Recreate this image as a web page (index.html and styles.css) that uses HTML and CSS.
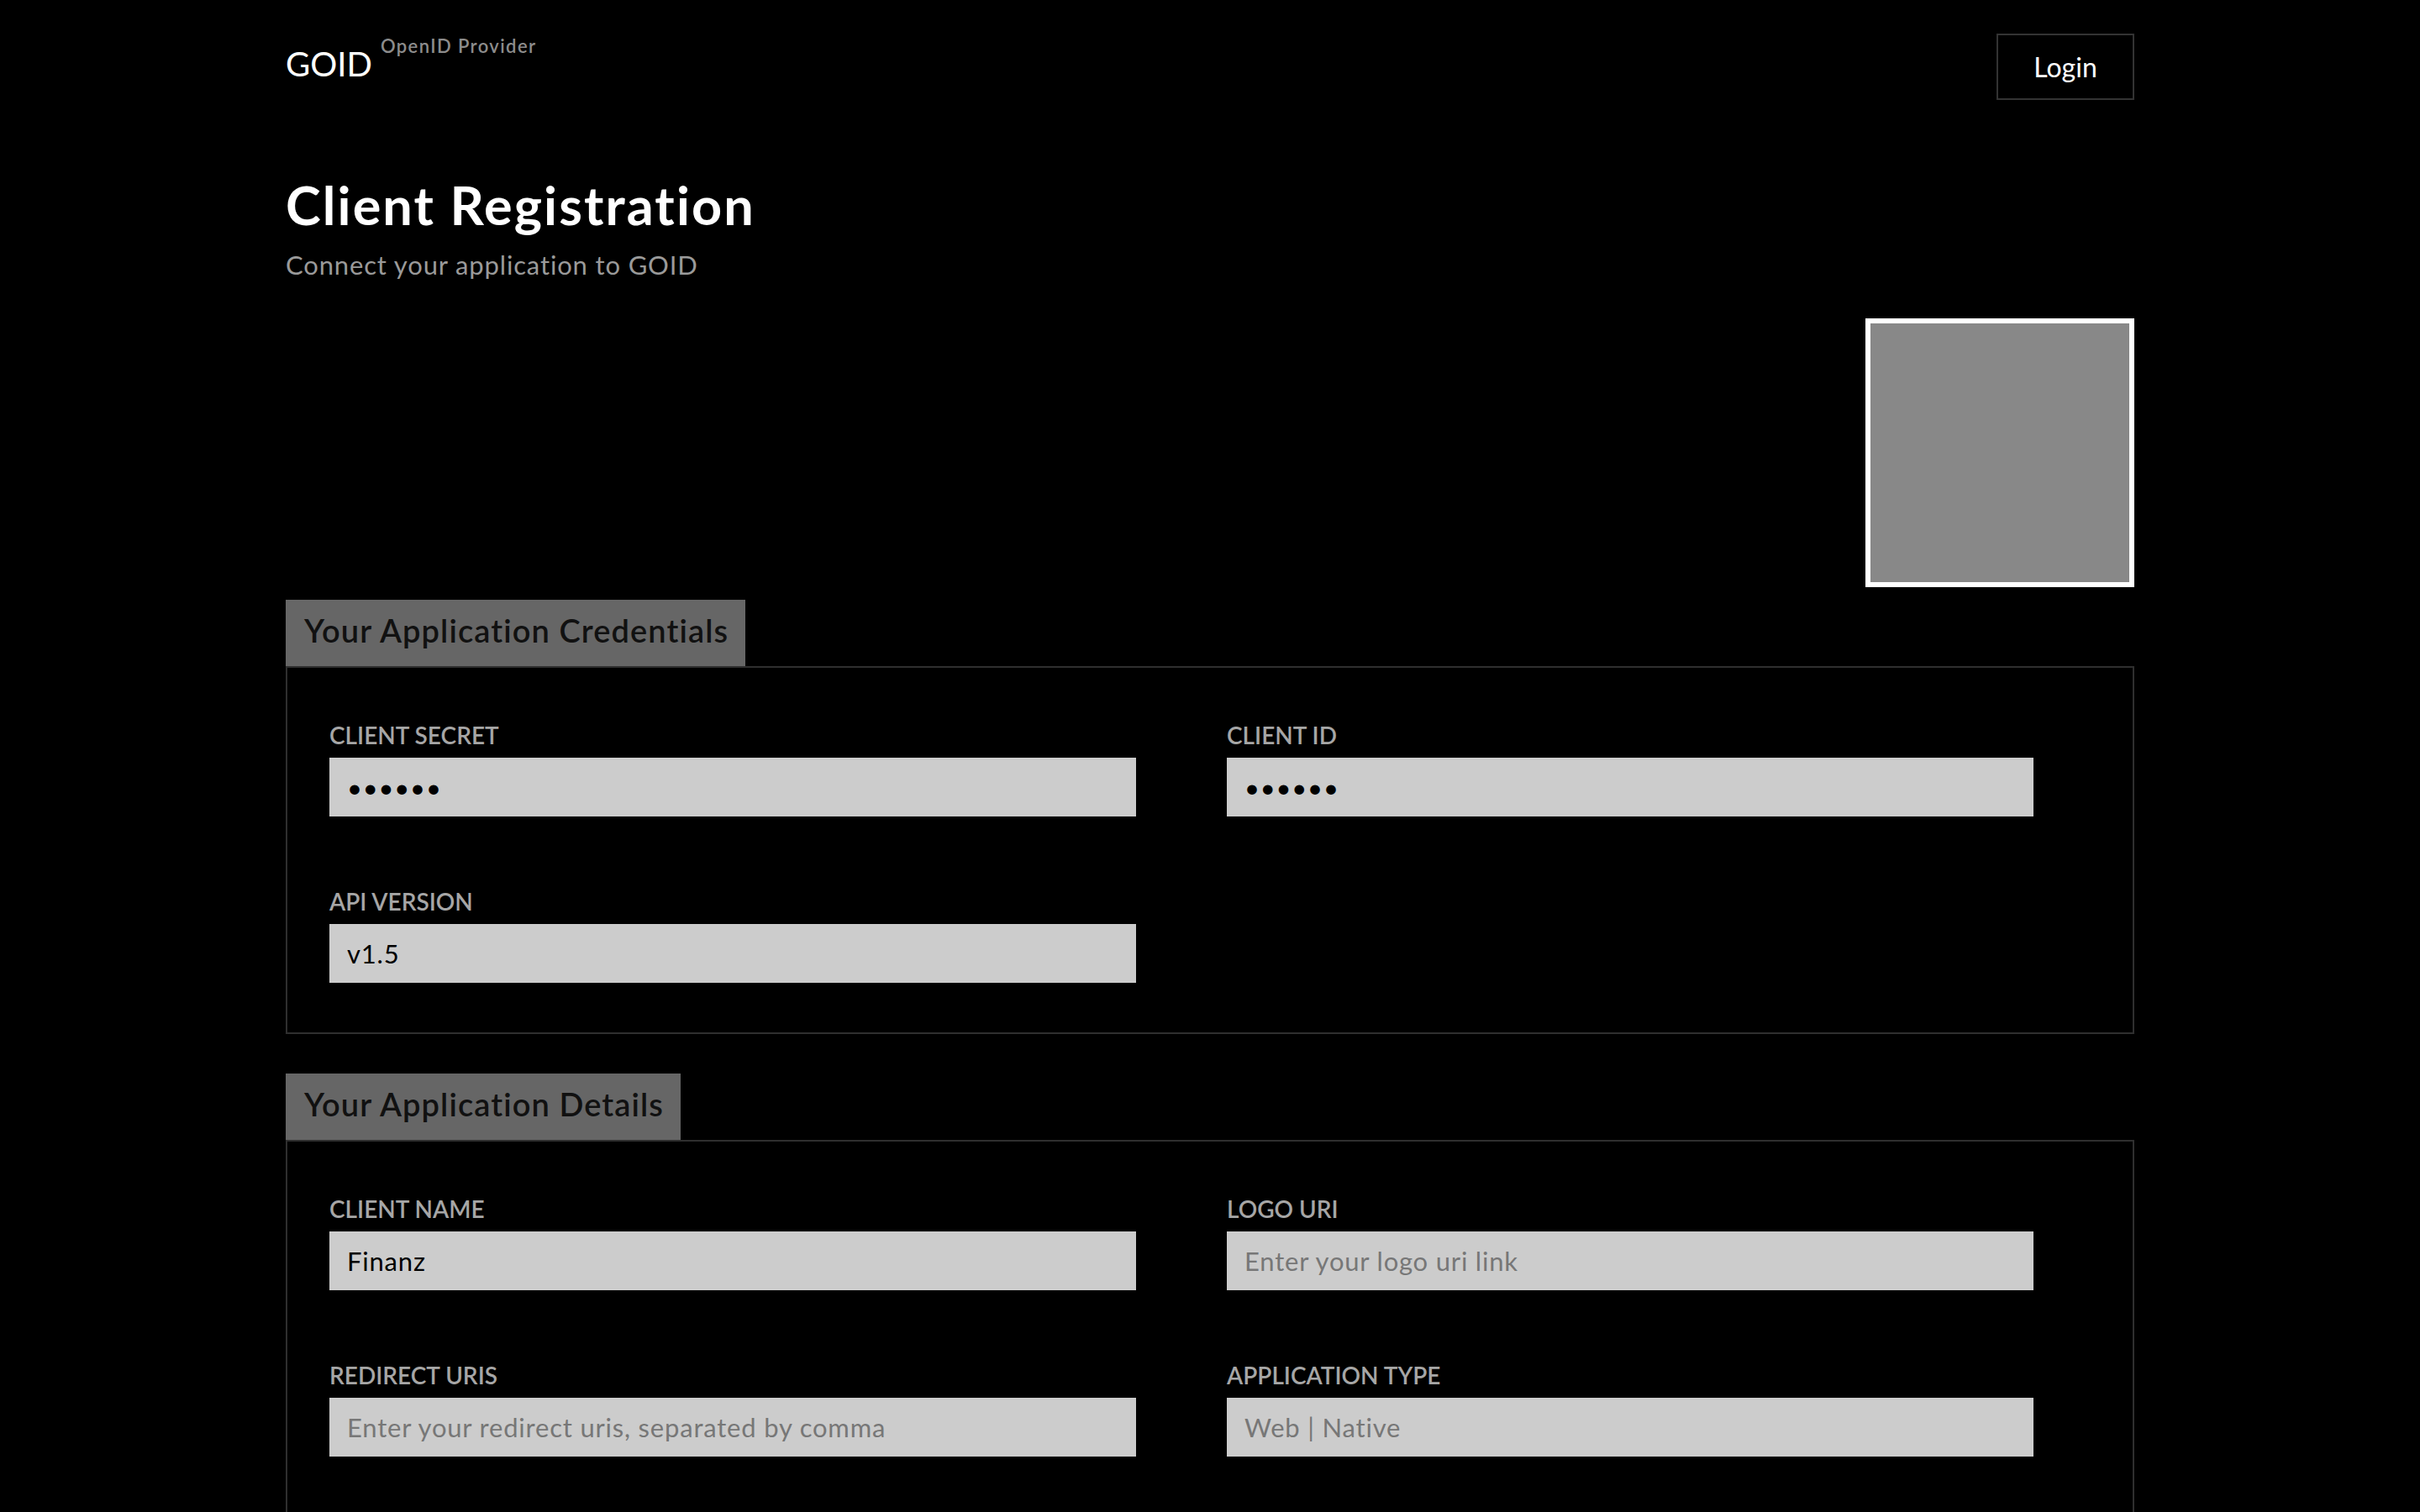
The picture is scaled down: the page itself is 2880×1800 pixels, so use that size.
FILE: index.html
```html
<!DOCTYPE html>
<html lang="en">
<head>
<meta charset="utf-8">
<title>GOID – Client Registration</title>
<link rel="stylesheet" href="styles.css">
</head>
<body>
<div class="page">
  <header class="header">
    <div class="brand">
      <span class="brand-name">GOID</span>
      <span class="brand-sub">OpenID Provider</span>
    </div>
    <button class="login-btn" type="button">Login</button>
  </header>

  <section class="intro">
    <h1 class="title">Client Registration</h1>
    <p class="subtitle">Connect your application to GOID</p>
  </section>

  <div class="logo-row">
    <div class="logo-box"></div>
  </div>

  <section class="panel">
    <h2 class="panel-tab">Your Application Credentials</h2>
    <div class="panel-body">
      <div class="field">
        <label class="field-label">CLIENT SECRET</label>
        <input class="field-input" type="password" value="secret" readonly>
      </div>
      <div class="field">
        <label class="field-label">CLIENT ID</label>
        <input class="field-input" type="password" value="client" readonly>
      </div>
      <div class="field">
        <label class="field-label">API VERSION</label>
        <input class="field-input" type="text" value="v1.5" readonly>
      </div>
    </div>
  </section>

  <section class="panel panel-details">
    <h2 class="panel-tab">Your Application Details</h2>
    <div class="panel-body panel-body-tall">
      <div class="field">
        <label class="field-label">CLIENT NAME</label>
        <input class="field-input" type="text" value="Finanz">
      </div>
      <div class="field">
        <label class="field-label">LOGO URI</label>
        <input class="field-input" type="text" placeholder="Enter your logo uri link">
      </div>
      <div class="field">
        <label class="field-label">REDIRECT URIS</label>
        <input class="field-input" type="text" placeholder="Enter your redirect uris, separated by comma">
      </div>
      <div class="field">
        <label class="field-label">APPLICATION TYPE</label>
        <input class="field-input" type="text" placeholder="Web | Native">
      </div>
    </div>
  </section>
</div>
</body>
</html>
```

FILE: styles.css
```css
html, body {
  margin: 0;
  padding: 0;
  background: #000;
}

body {
  font-family: "Lato", "Noto Sans", sans-serif;
  color: #fff;
}

.page {
  width: 2200px;
  margin: 0 auto;
  padding-top: 40px;
}

/* Header */
.header {
  display: flex;
  justify-content: space-between;
  align-items: flex-start;
}

.brand {
  display: flex;
  align-items: flex-start;
}

.brand-name {
  font-size: 40px;
  line-height: 40px;
  font-weight: 400;
  margin-top: 16px;
  color: #fff;
}

.brand-sub {
  font-size: 22px;
  line-height: 22px;
  font-weight: 600;
  letter-spacing: 1.4px;
  margin-top: 4px;
  margin-left: 10px;
  color: #8c8c8c;
}

.login-btn {
  box-sizing: border-box;
  width: 164px;
  height: 79px;
  background: #000;
  border: 2px solid #333;
  color: #fff;
  font-family: inherit;
  font-size: 32px;
  line-height: 75px;
  padding: 0;
  cursor: pointer;
}

/* Intro */
.intro {
  margin-top: 93px;
}

.title {
  margin: 0;
  font-size: 63px;
  line-height: 63px;
  font-weight: 700;
  letter-spacing: 2.1px;
  color: #fff;
}

.subtitle {
  margin: 25px 0 0;
  font-size: 31px;
  line-height: 31px;
  letter-spacing: 0.85px;
  color: #9a9a9a;
}

/* Logo placeholder */
.logo-row {
  display: flex;
  justify-content: flex-end;
  margin-top: 48px;
}

.logo-box {
  box-sizing: border-box;
  width: 320px;
  height: 320px;
  border: 6px solid #fff;
  background: #888;
}

/* Panels */
.panel {
  margin-top: 15px;
}

.panel-details {
  margin-top: 47px;
}

.panel-tab {
  display: inline-block;
  margin: 0;
  height: 79px;
  box-sizing: border-box;
  padding: 0 20px 6px 22px;
  background: #666;
  color: #111;
  font-size: 38px;
  line-height: 73px;
  font-weight: 600;
  letter-spacing: 1.1px;
  vertical-align: top;
}

.panel-body {
  border: 2px solid #2f2f2f;
  padding: 66px 50px 59px;
  display: grid;
  grid-template-columns: 960px 960px;
  column-gap: 108px;
  row-gap: 87px;
}

.panel-body-tall {
  padding-bottom: 160px;
}

.field {
  display: flex;
  flex-direction: column;
}

.field-label {
  font-size: 28px;
  line-height: 28px;
  font-weight: 600;
  color: #a6a6a6;
  margin-bottom: 13px;
}

.field-input {
  box-sizing: border-box;
  width: 960px;
  height: 70px;
  border: none;
  outline: none;
  background: #ccc;
  color: #000;
  font-family: inherit;
  font-size: 31px;
  letter-spacing: 0.8px;
  padding: 0 21px;
  margin: 0;
}

.field-input::placeholder {
  color: #777;
  opacity: 1;
}
```
